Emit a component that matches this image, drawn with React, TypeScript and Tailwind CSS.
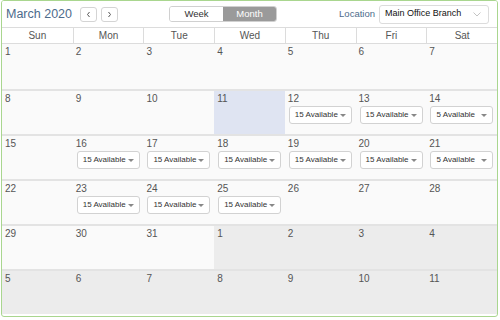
import React from 'react';

const days = ['Sun', 'Mon', 'Tue', 'Wed', 'Thu', 'Fri', 'Sat'];

type Cell = { n: number; other?: boolean; today?: boolean; avail?: string };

const avail: Record<number, string> = {
  12: '15 Available', 13: '15 Available', 14: '5 Available',
  16: '15 Available', 17: '15 Available', 18: '15 Available', 19: '15 Available', 20: '15 Available', 21: '5 Available',
  23: '15 Available', 24: '15 Available', 25: '15 Available',
};

const weeks: Cell[][] = [];
let d = 1;
for (let w = 0; w < 6; w++) {
  const row: Cell[] = [];
  for (let i = 0; i < 7; i++) {
    if (d <= 31) {
      row.push({ n: d, today: d === 11, avail: avail[d] });
    } else {
      row.push({ n: d - 31, other: true });
    }
    d++;
  }
  weeks.push(row);
}

const Caret = () => (
  <svg width="6" height="3" viewBox="0 0 6 3" className="shrink-0">
    <path d="M0 0h6L3 3z" fill="#888" />
  </svg>
);

export default function App() {
  return (
    <div className="w-[500px] h-[320px] bg-white font-['Liberation_Sans',Arial,sans-serif] text-[#555]">
      <div className="ml-[1px] w-[497px] h-[317px] border border-[#a9d68f] rounded-[3px] overflow-hidden flex flex-col">
        <div className="h-[26px] shrink-0 flex items-center pl-[4px] pr-[8px] bg-white">
          <span className="text-[12.5px] text-[#4d6b8b] leading-none">March 2020</span>
          <div className="flex gap-[4px] ml-[8px]">
            <button className="w-[17px] h-[15px] border border-[#d4d4d4] rounded-[3px] bg-white flex items-center justify-center">
              <svg width="5" height="7" viewBox="0 0 5 7"><path d="M3.5 1L1.5 3.5L3.5 6" stroke="#555" fill="none" /></svg>
            </button>
            <button className="w-[17px] h-[15px] border border-[#d4d4d4] rounded-[3px] bg-white flex items-center justify-center">
              <svg width="5" height="7" viewBox="0 0 5 7"><path d="M1.5 1L3.5 3.5L1.5 6" stroke="#555" fill="none" /></svg>
            </button>
          </div>
          <div className="ml-[51px] flex h-[16px] border border-[#d0d0d0] rounded-[3px] overflow-hidden text-[9.5px]">
            <div className="w-[53px] flex items-center justify-center bg-white text-[#333]">Week</div>
            <div className="w-[53px] flex items-center justify-center bg-[#9a9a9a] text-white">Month</div>
          </div>
          <div className="ml-auto flex items-center">
            <span className="text-[9.5px] text-[#4d6b8b] mr-[4px] whitespace-nowrap">Location</span>
            <div className="w-[110px] h-[19px] border border-[#dcdcdc] rounded-[3px] bg-white flex items-center pl-[5px] pr-[7px] text-[9px] text-[#111] whitespace-nowrap">
              <span>Main Office Branch</span>
              <svg width="8" height="5" viewBox="0 0 8 5" className="ml-auto shrink-0">
                <path d="M0.5 0.5L4 4L7.5 0.5" stroke="#c4c4c4" fill="none" />
              </svg>
            </div>
          </div>
        </div>
        <div className="grid grid-cols-7 h-[17px] shrink-0 border-t border-b border-[#dcdcdc] bg-white">
          {days.map((n, i) => (
            <div key={n} className={`flex items-center justify-center text-[10px] text-[#555] ${i > 0 ? 'border-l border-[#dcdcdc]' : ''}`}>
              {n}
            </div>
          ))}
        </div>
        <div className="flex flex-col">
          {weeks.map((row, wi) => (
            <div key={wi} className={`grid grid-cols-7 h-[45px] ${wi > 0 ? 'border-t-2 border-[#e3e3e3]' : ''}`}>
              {row.map((c, ci) => (
                <div
                  key={ci}
                  className={`pl-[3px] pt-[2px] ${c.today ? 'bg-[#dfe4f2]' : c.other ? 'bg-[#ececec]' : 'bg-[#fafafa]'}`}
                >
                  <div className="text-[10px] leading-[12px] text-[#555]">{c.n}</div>
                  {c.avail && (
                    <div className="mt-[1px] ml-[1px] w-[63px] h-[18px] bg-white border border-[#d2d2d2] rounded-[3px] flex items-center justify-center text-[8px] text-[#333] whitespace-nowrap">
                      <span className={c.avail.startsWith('5') ? 'mr-[6px]' : 'mr-[2px]'}>{c.avail}</span>
                      <Caret />
                    </div>
                  )}
                </div>
              ))}
            </div>
          ))}
        </div>
      </div>
    </div>
  );
}
